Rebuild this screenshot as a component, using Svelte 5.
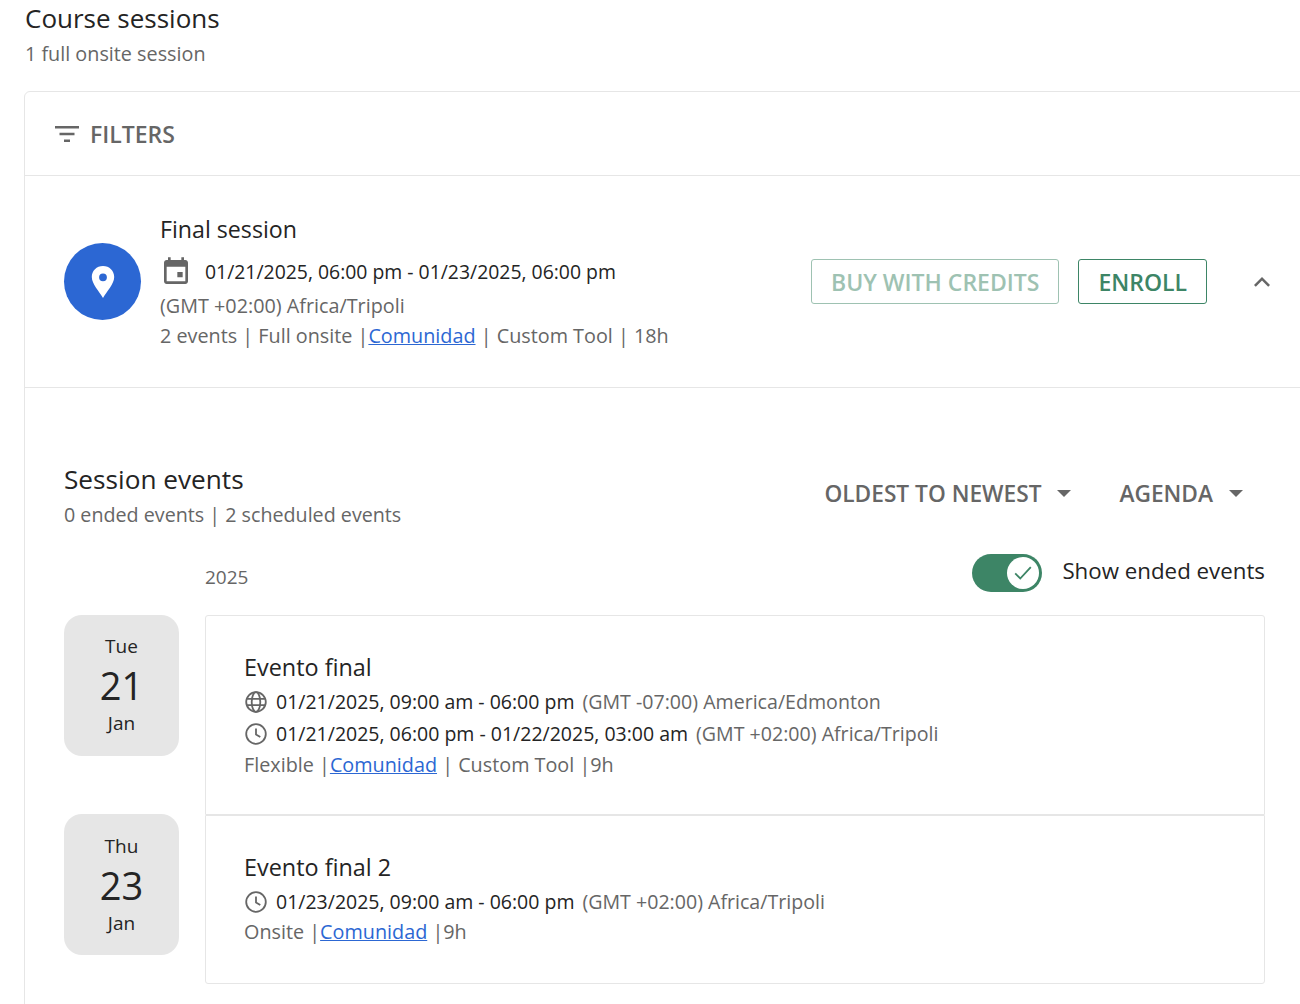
<script lang="ts">
  const events = [
    {
      weekday: 'Tue', day: '21', month: 'Jan', title: 'Evento final',
      times: [
        { icon: 'globe', range: '01/21/2025, 09:00 am - 06:00 pm', zone: '(GMT -07:00) America/Edmonton' },
        { icon: 'clock', range: '01/21/2025, 06:00 pm - 01/22/2025, 03:00 am', zone: '(GMT +02:00) Africa/Tripoli' }
      ],
      kind: 'Flexible', tool: 'Custom Tool', hours: '9h'
    },
    {
      weekday: 'Thu', day: '23', month: 'Jan', title: 'Evento final 2',
      times: [
        { icon: 'clock', range: '01/23/2025, 09:00 am - 06:00 pm', zone: '(GMT +02:00) Africa/Tripoli' }
      ],
      kind: 'Onsite', tool: '', hours: '9h'
    }
  ];
</script>

<main class="page">
  <h1 class="heading">Course sessions</h1>
  <p class="subheading">1 full onsite session</p>

  <section class="panel">
    <div class="filters">
      <svg class="filter-icon" width="24" height="24" viewBox="0 0 24 24"><path d="M0 4h24v2.400H0zM4.500 10.800h15v2.400h-15zM9 17.600h6V20H9z" fill="#666"/></svg>
      <span>FILTERS</span>
    </div>

    <div class="session">
      <div class="pin">
        <svg width="24" height="32" viewBox="0 0 24 32"><path fill-rule="evenodd" d="M12 0C5.600 0 .8 4.900.8 11c0 7 7.500 14.500 11.200 21 3.700-6.500 11.200-14 11.200-21C23.200 4.900 18.400 0 12 0zm0 7.400a3.900 3.900 0 1 1 0 7.800 3.900 3.900 0 0 1 0-7.800z" fill="#fff"/></svg>
      </div>
      <div class="session-info">
        <div class="session-name">Final session</div>
        <div class="session-date">
          <svg width="32" height="32" viewBox="0 0 24 24"><path d="M19 3h-1V1h-2v2H8V1H6v2H5c-1.100 0-2 .9-2 2v14c0 1.100.9 2 2 2h14c1.100 0 2-.9 2-2V5c0-1.100-.9-2-2-2zm0 16H5V8h14v11zm-6-7h4v4h-4z" fill="#666"/></svg>
          <span>01/21/2025, 06:00 pm - 01/23/2025, 06:00 pm</span>
        </div>
        <div class="muted zone">(GMT +02:00) Africa/Tripoli</div>
        <div class="muted meta">2 events | Full onsite |<a href="#top">Comunidad</a> | Custom Tool | 18h</div>
      </div>
      <div class="actions">
        <button class="btn btn-light">BUY WITH CREDITS</button>
        <button class="btn">ENROLL</button>
        <svg class="chevron" width="24" height="24" viewBox="0 0 24 24"><path d="M12 7L4 15l1.800 1.800L12 10.600l6.200 6.200L20 15z" fill="#666"/></svg>
      </div>
    </div>

    <div class="events">
      <div class="events-head">
        <div>
          <h2 class="events-title">Session events</h2>
          <p class="events-count">0 ended events | 2 scheduled events</p>
        </div>
        <div class="sorters">
          <span class="sorter">OLDEST TO NEWEST <i class="caret"></i></span>
          <span class="sorter">AGENDA <i class="caret"></i></span>
        </div>
      </div>

      <div class="year-row">
        <span class="year">2025</span>
        <div class="toggle-wrap">
          <span class="toggle">
            <span class="knob">
              <svg width="22" height="22" viewBox="0 0 24 24"><path d="M3.500 12.500l5.500 5.500L20.500 5.500" fill="none" stroke="#3d8566" stroke-width="2"/></svg>
            </span>
          </span>
          <span class="toggle-label">Show ended events</span>
        </div>
      </div>

      <div class="timeline">
        {#each events as ev, i}
          <div class="event-row" class:second={i === 1}>
            <div class="date-chip">
              <span class="chip-weekday">{ev.weekday}</span>
              <span class="chip-day">{ev.day}</span>
              <span class="chip-month">{ev.month}</span>
            </div>
            <article class="event-card">
              <div class="event-title">{ev.title}</div>
              {#each ev.times as t}
                <div class="event-time">
                  {#if t.icon === 'globe'}
                    <svg width="24" height="24" viewBox="0 0 24 24" fill="none" stroke="#666" stroke-width="1.800"><circle cx="12" cy="12" r="9.800"/><ellipse cx="12" cy="12" rx="4.300" ry="9.800"/><path d="M3 8.800h18M3 15.200h18"/></svg>
                  {:else}
                    <svg width="24" height="24" viewBox="0 0 24 24" fill="none" stroke="#666" stroke-width="1.800"><circle cx="12" cy="12" r="9.800"/><path d="M12 6.500V12.500l4.300 2.600"/></svg>
                  {/if}
                  <span class="range">{t.range}</span>
                  <span class="muted zone-inline">{t.zone}</span>
                </div>
              {/each}
              <div class="muted event-meta">{ev.kind} |<a href="#top">Comunidad</a>{ev.tool ? ` | ${ev.tool} ` : ' '}|{ev.hours}</div>
            </article>
          </div>
        {/each}
      </div>
    </div>
  </section>
</main>

<style>
  :global(body){
    margin:0;
    background:#fff;
    overflow:hidden;
  }
  .page{
    width:1300px;
    height:1004px;
    overflow:hidden;
    box-sizing:border-box;
    padding:0 0 0 24px;
    font-family:"Open Sans", sans-serif;
    color:#242424;
  }
  .heading{
    margin:0;
    padding-left:1px;
    font-size:26px;
    line-height:36px;
    font-weight:500;
  }
  .subheading{
    margin:9px 0 0;
    padding-left:1px;
    font-size:19.800px;
    line-height:18px;
    color:#666;
  }
  .panel{
    margin-top:28px;
    width:1320px;
    height:1000px;
    box-sizing:border-box;
    border:1px solid #e6e6e6;
    border-radius:6px 0 0 0;
  }
  .filters{
    height:83px;
    display:flex;
    align-items:center;
    gap:11px;
    padding-left:30px;
    border-bottom:1px solid #e6e6e6;
    font-size:23px;
    font-weight:600;
    color:#666;
  }
  .session{
    height:212px;
    box-sizing:border-box;
    display:flex;
    align-items:center;
    padding-left:39px;
    border-bottom:1px solid #e6e6e6;
  }
  .pin{
    width:77px;
    height:77px;
    flex:none;
    border-radius:50%;
    background:#2c67d3;
    display:flex;
    align-items:center;
    justify-content:center;
  }
  .session-info{
    margin-left:19px;
    width:650px;
    flex:none;
  }
  .session-name{
    font-size:23.200px;
    line-height:30px;
    font-weight:500;
  }
  .session-date{
    display:flex;
    align-items:center;
    gap:13px;
    margin-top:12px;
    font-size:19.400px;
    line-height:32px;
    font-weight:500;
  }
  .zone{
    font-size:19.800px;
    line-height:26px;
    margin-top:5px;
  }
  .meta{
    font-size:19.800px;
    line-height:28px;
    margin-top:3px;
  }
  .muted{
    color:#666;
  }
  a{
    color:#2c67d3;
    text-decoration:underline;
  }
  .actions{
    display:flex;
    align-items:center;
    margin-left:1px;
  }
  .btn{
    font-family:inherit;
    height:45px;
    box-sizing:border-box;
    padding:0 19px;
    border:1.500px solid #3d8566;
    border-radius:3px;
    background:#fff;
    color:#3d8566;
    font-size:23px;
    font-weight:600;
    white-space:nowrap;
  }
  .btn-light{
    border-color:#9ec2b2;
    color:#9ec2b2;
    margin-right:19px;
  }
  .chevron{
    margin-left:43px;
  }
  .events{
    padding:0 0 0 39px;
    width:1240px;
    box-sizing:border-box;
  }
  .events-head{
    display:flex;
    justify-content:space-between;
    align-items:flex-start;
    padding-top:72px;
  }
  .events-title{
    margin:0;
    font-size:26.200px;
    line-height:38px;
    font-weight:500;
  }
  .events-count{
    margin:3px 0 0;
    font-size:19.700px;
    line-height:28px;
    color:#666;
  }
  .sorters{
    display:flex;
    gap:48px;
    padding-top:16px;
    padding-right:22px;
  }
  .sorter{
    display:flex;
    align-items:center;
    gap:16px;
    font-size:22.700px;
    line-height:36px;
    font-weight:600;
    color:#666;
  }
  .caret{
    width:0;
    height:0;
    margin-top:-2px;
    border-left:7px solid transparent;
    border-right:7px solid transparent;
    border-top:7px solid #666;
  }
  .year-row{
    display:flex;
    justify-content:space-between;
    align-items:center;
    height:38px;
    margin-top:25px;
    padding-left:141px;
  }
  .year{
    font-size:19px;
    color:#666;
    padding-top:7px;
  }
  .toggle-wrap{
    display:flex;
    align-items:center;
    gap:20px;
  }
  .toggle{
    width:70px;
    height:38px;
    box-sizing:border-box;
    padding:3px;
    border-radius:19px;
    background:#3d8566;
    display:flex;
    justify-content:flex-end;
  }
  .knob{
    width:32px;
    height:32px;
    border-radius:50%;
    background:#fff;
    display:flex;
    align-items:center;
    justify-content:center;
  }
  .toggle-label{
    font-size:22.300px;
    line-height:30px;
    margin-top:-4px;
  }
  .timeline{
    margin-top:23px;
  }
  .event-row{
    display:flex;
    gap:26px;
    align-items:flex-start;
  }
  .date-chip{
    width:115px;
    height:141px;
    flex:none;
    border-radius:18px;
    background:#e6e6e6;
    display:flex;
    flex-direction:column;
    align-items:center;
    padding-top:17px;
    box-sizing:border-box;
  }
  .second .date-chip{
    margin-top:-1px;
    padding-top:18px;
  }
  .chip-weekday,.chip-month{
    font-size:19px;
    line-height:28px;
  }
  .chip-day{
    font-size:38px;
    line-height:50px;
    font-weight:500;
  }
  .chip-month{
    margin-top:-1px;
  }
  .event-card{
    flex:1;
    height:200px;
    box-sizing:border-box;
    border:1px solid #e6e6e6;
    border-radius:3px 3px 0 0;
    padding:35px 0 0 38px;
  }
  .second .event-card{
    height:169px;
    border-radius:0 0 3px 3px;
  }
  .event-title{
    font-size:23.400px;
    line-height:32px;
    font-weight:500;
    margin-bottom:3px;
  }
  .event-time{
    display:flex;
    align-items:center;
    font-size:20px;
    line-height:32px;
    gap:8px;
  }
  .range{
    font-weight:500;
    font-size:19.500px;
  }
  .zone-inline{
    font-size:19.600px;
  }
  .event-meta{
    font-size:19.800px;
    line-height:30px;
  }
  .second .event-meta{
    margin-top:-1px;
  }
</style>
